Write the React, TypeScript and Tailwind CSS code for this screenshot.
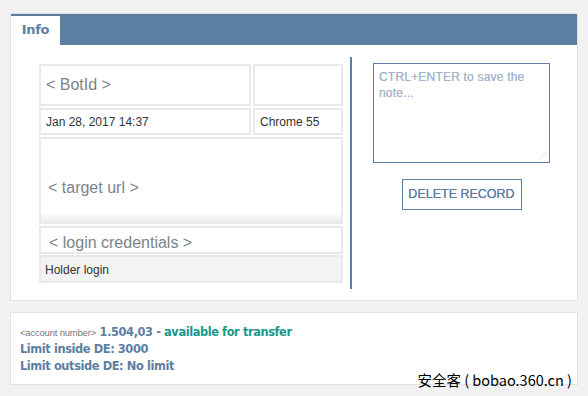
export default function App() {
  const box = "border-2 border-[#e9e9e9] bg-white flex items-center";
  return (
    <div className="w-[588px] h-[396px] bg-[#f2f2f2] pt-[13px] px-[10px] font-['Liberation_Sans',Arial,sans-serif] relative">
      {/* top panel */}
      <div className="h-[288px] bg-white border border-[#e2e2e2] flex flex-col">
        <div className="flex h-[31px] bg-[#5b7ea1]">
          <div className="w-[49px] bg-white border-t-2 border-[#5b7ea1] flex items-center justify-center text-[13px] font-bold text-[#5b7ea1] font-['DejaVu_Sans',sans-serif] tracking-[-0.3px] pb-[2px]">
            Info
          </div>
        </div>
        <div className="flex flex-1">
          {/* left column */}
          <div className="ml-[28px] mt-[19px] w-[304px] flex flex-col gap-[2px]">
            <div className="flex gap-[2px] h-[42px]">
              <div className={`${box} w-[212px] pl-[5px] text-[16px] text-[#7b8488]`}>&lt; BotId &gt;</div>
              <div className={`${box} flex-1`} />
            </div>
            <div className="flex gap-[2px] h-[27px]">
              <div className={`${box} w-[212px] pl-[5px] text-[12px] text-[#333]`}>Jan 28, 2017 14:37</div>
              <div className={`${box} flex-1 pl-[5px] text-[12px] text-[#333]`}>Chrome 55</div>
            </div>
            <div className="h-[87px] border-2 border-[#e9e9e9] bg-white">
              <div className="h-full flex items-center pl-[7px] pt-[14px] text-[16px] text-[#7b8488] bg-gradient-to-b from-white from-88% to-[#ececec]">
                &lt; target url &gt;
              </div>
            </div>
            <div className={`${box} h-[28px] pl-[8px] pt-[6px] text-[16px] text-[#7b8488]`}>&lt; login credentials &gt;</div>
            <div className="h-[28px] -mt-[1px] border-2 border-[#e9e9e9] bg-[#f3f3f3] flex items-center pl-[4px] pt-[2px] text-[12px] text-[#333]">
              Holder login
            </div>
          </div>
          {/* separator */}
          <div className="ml-[7px] mt-[12px] w-[2px] h-[232px] bg-[#5b7ea1]" />
          {/* right column */}
          <div className="flex-1 flex flex-col items-center pt-[18px] pr-[6px]">
            <div className="relative w-[177px] h-[100px] border border-[#5b7ea1] px-[5px] py-[5px] text-[12px] leading-[16px] text-[#a3b6cc] tracking-[0.2px] [text-shadow:0_0_0.5px_#a3b6cc]">
              CTRL+ENTER to save the note...
              <span className="absolute right-[3px] bottom-[3px] text-[7px] leading-none text-[#bbb] [text-shadow:none]">⋰</span>
            </div>
            <button className="mt-[16px] w-[120px] h-[31px] border border-[#5b7ea1] text-[12.5px] text-[#5b7ea1] [text-shadow:0_0_0.4px_#5b7ea1]">
              DELETE RECORD
            </button>
          </div>
        </div>
      </div>
      {/* bottom panel */}
      <div className="mt-[11px] h-[73px] bg-white border border-[#e2e2e2] pl-[9px] pt-[11px] text-[11.4px] leading-[17px] font-bold font-['DejaVu_Sans',sans-serif] text-[#5b7ea1] tracking-[-0.4px]">
        <div>
          <span className="text-[9.5px] font-normal text-[#777] font-['Liberation_Sans',sans-serif] tracking-[-0.2px]">&lt;account number&gt;</span>{" "}
          1.504,03 - <span className="text-[#16998c]">available for transfer</span>
        </div>
        <div>Limit inside DE: 3000</div>
        <div>Limit outside DE: No limit</div>
      </div>
      <div className="absolute right-[16px] bottom-[9px] text-[14.5px] text-black font-['Noto_Sans_CJK_SC',sans-serif] leading-none">
        安全客 ( bobao.360.cn )
      </div>
    </div>
  );
}
